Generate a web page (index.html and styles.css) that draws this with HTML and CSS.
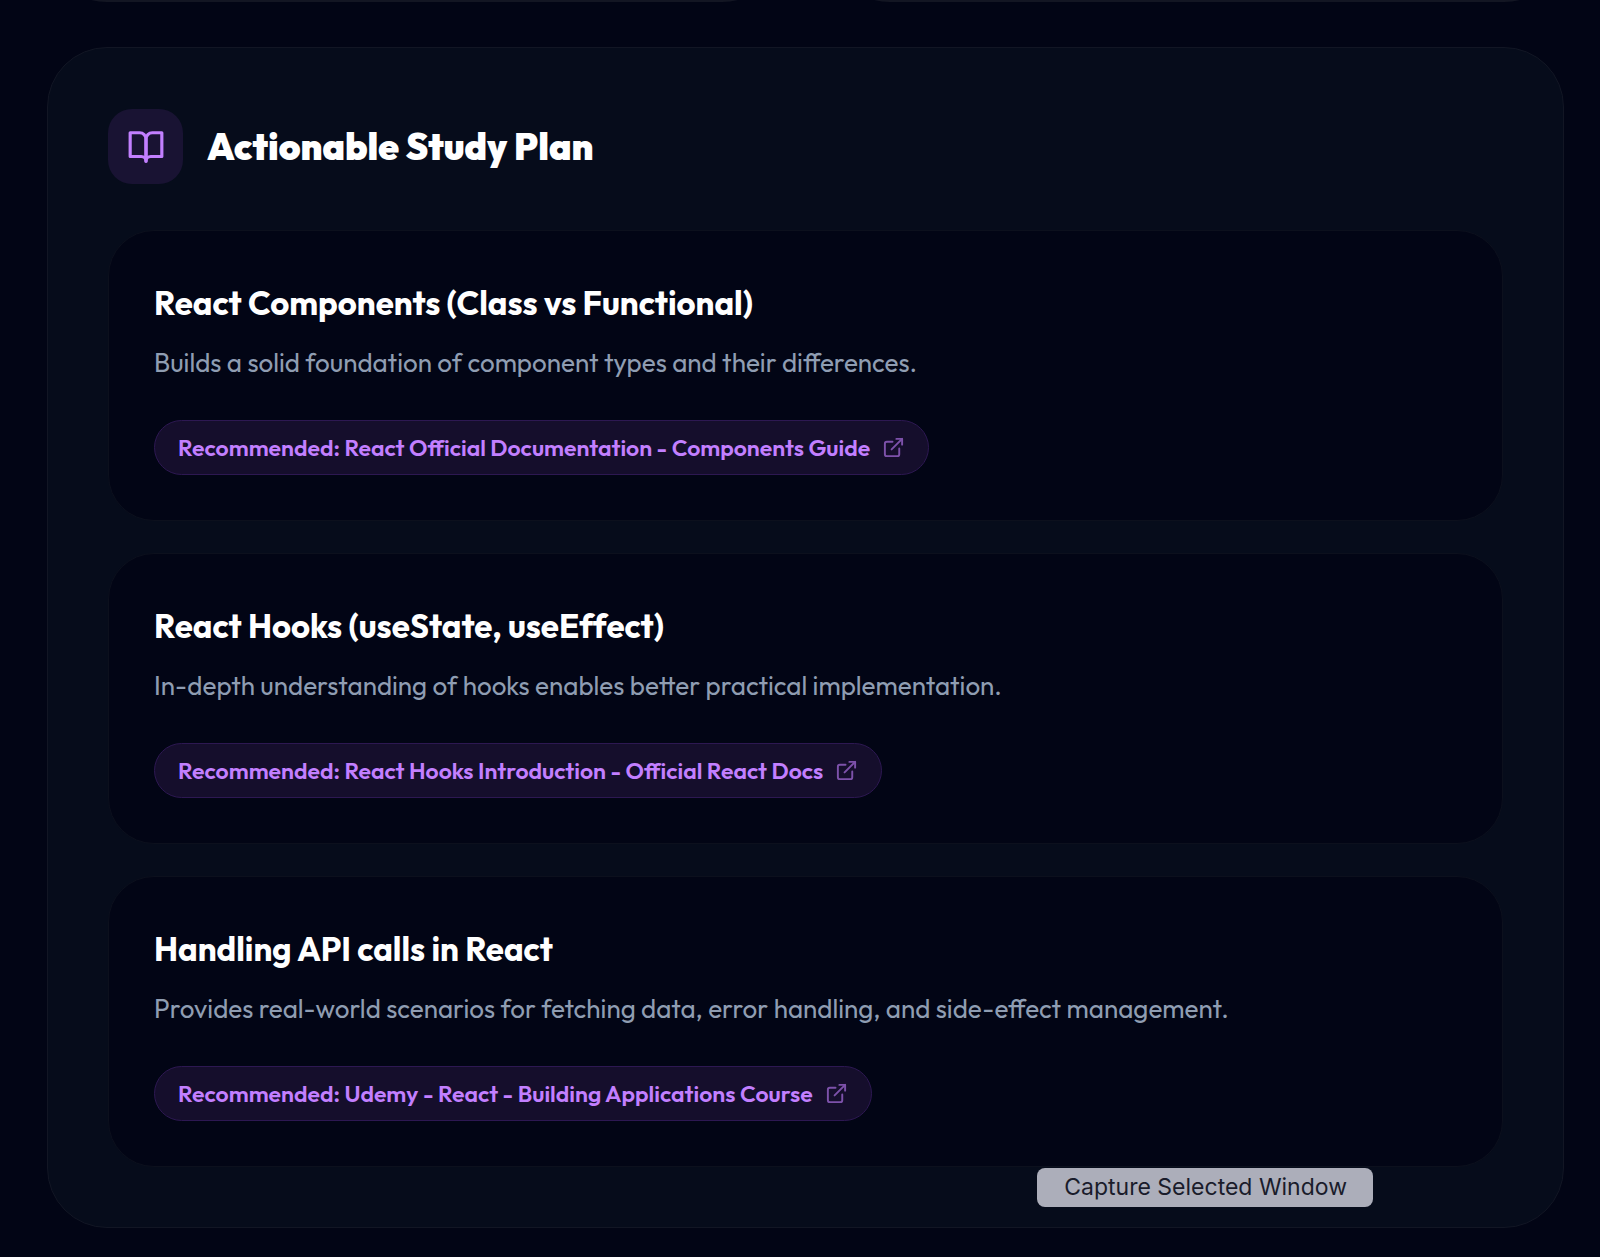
FILE: index.html
```html
<!DOCTYPE html>
<html lang="en">
<head>
<meta charset="utf-8">
<meta name="viewport" content="width=device-width, initial-scale=1">
<title>Actionable Study Plan</title>
<link rel="stylesheet" href="styles.css">
</head>
<body>
<svg class="sprite" aria-hidden="true">
  <symbol id="external-link" viewBox="0 0 24 24">
    <path d="M15 3h6v6"/><path d="M10 14 21 3"/><path d="M18 13v6a2 2 0 0 1-2 2H5a2 2 0 0 1-2-2V8a2 2 0 0 1 2-2h6"/>
  </symbol>
</svg>
<main class="page">
  <div class="summary">
    <div class="summary-card"></div>
    <div class="summary-card"></div>
  </div>
  <section class="panel" aria-labelledby="plan-title">
    <header class="panel-header">
      <span class="badge">
        <svg class="badge-icon" viewBox="0 0 24 24" aria-hidden="true"><path d="M2 3h6a4 4 0 0 1 4 4v14a3 3 0 0 0-3-3H2z"/><path d="M22 3h-6a4 4 0 0 0-4 4v14a3 3 0 0 1 3-3h7z"/></svg>
      </span>
      <h2 class="panel-title" id="plan-title">Actionable Study Plan</h2>
    </header>
    <div class="topics">
      <article class="topic">
        <h3 class="topic-title">React Components (Class vs Functional)</h3>
        <p class="topic-text">Builds a solid foundation of component types and their differences.</p>
        <a class="resource" href="#components">Recommended: React Official Documentation - Components Guide <svg class="resource-icon" aria-hidden="true"><use href="#external-link"/></svg></a>
      </article>
      <article class="topic">
        <h3 class="topic-title">React Hooks (useState, useEffect)</h3>
        <p class="topic-text">In-depth understanding of hooks enables better practical implementation.</p>
        <a class="resource" href="#hooks">Recommended: React Hooks Introduction - Official React Docs <svg class="resource-icon" aria-hidden="true"><use href="#external-link"/></svg></a>
      </article>
      <article class="topic">
        <h3 class="topic-title">Handling API calls in React</h3>
        <p class="topic-text">Provides real-world scenarios for fetching data, error handling, and side-effect management.</p>
        <a class="resource" href="#api">Recommended: Udemy - React - Building Applications Course <svg class="resource-icon" aria-hidden="true"><use href="#external-link"/></svg></a>
      </article>
    </div>
    <div class="tooltip" role="tooltip">Capture Selected Window</div>
  </section>
</main>
</body>
</html>
```
FILE: styles.css
```css
* { box-sizing: border-box; }

body {
  margin: 0;
  background: #020515;
  color: #fff;
  font-family: Outfit, Lato, sans-serif;
}

h2, h3, p { margin: 0; }

.sprite { position: absolute; width: 0; height: 0; }

.page {
  padding: 0 36px 30px 47px;
  overflow: hidden;
}

/* The summary cards are scrolled up, only their lower edge shows */
.summary {
  display: grid;
  grid-template-columns: 1fr 1fr;
  gap: 48px;
  margin: -158px 0 45px;
}

.summary-card {
  height: 160px;
  border: 2px solid #131623;
  border-radius: 60px;
  background: #060c1b;
}

.panel {
  position: relative;
  padding: 61px 60px 60px;
  border: 1px solid #121624;
  border-radius: 60px;
  background: #060c1b;
}

.panel-header {
  display: flex;
  align-items: center;
  gap: 24px;
  margin-bottom: 46px;
}

.badge {
  display: grid;
  place-items: center;
  width: 75px;
  height: 75px;
  border-radius: 24px;
  background: #191333;
}

.badge-icon {
  width: 38px;
  height: 38px;
  fill: none;
  stroke: #c27fff;
  stroke-width: 2;
  stroke-linecap: round;
  stroke-linejoin: round;
}

.panel-title {
  font-size: 37px;
  line-height: 48px;
  font-weight: 900;
}

.topics {
  display: grid;
  gap: 32px;
}

.topic {
  padding: 50px 45px 45px;
  border: 1px solid #0c101d;
  border-radius: 46px;
  background: #020515;
}

.topic-title {
  margin-bottom: 16px;
  font-size: 33px;
  line-height: 44px;
  font-weight: 700;
  font-variant-ligatures: none;
}

.topic-text {
  margin-bottom: 35px;
  color: #8f9db2;
  font-size: 26px;
  line-height: 44px;
}

.resource {
  display: inline-flex;
  align-items: center;
  gap: 12px;
  padding: 12px 23px;
  border: 1px solid #2d1852;
  border-radius: 28px;
  background: #150e2c;
  color: #c27fff;
  font-size: 23px;
  line-height: 29px;
  font-weight: 600;
  text-decoration: none;
  vertical-align: top;
}

.resource-icon {
  flex: none;
  width: 23px;
  height: 23px;
  fill: none;
  stroke: currentColor;
  stroke-width: 2;
  stroke-linecap: round;
  stroke-linejoin: round;
  opacity: 0.6;
}

.tooltip {
  position: absolute;
  right: 190px;
  bottom: 20px;
  padding: 4px 26px 4px 27px;
  border-radius: 8px;
  background: #acaeba;
  color: #1a1c2b;
  font-family: Inter, sans-serif;
  font-size: 23px;
  line-height: 31px;
}
```
